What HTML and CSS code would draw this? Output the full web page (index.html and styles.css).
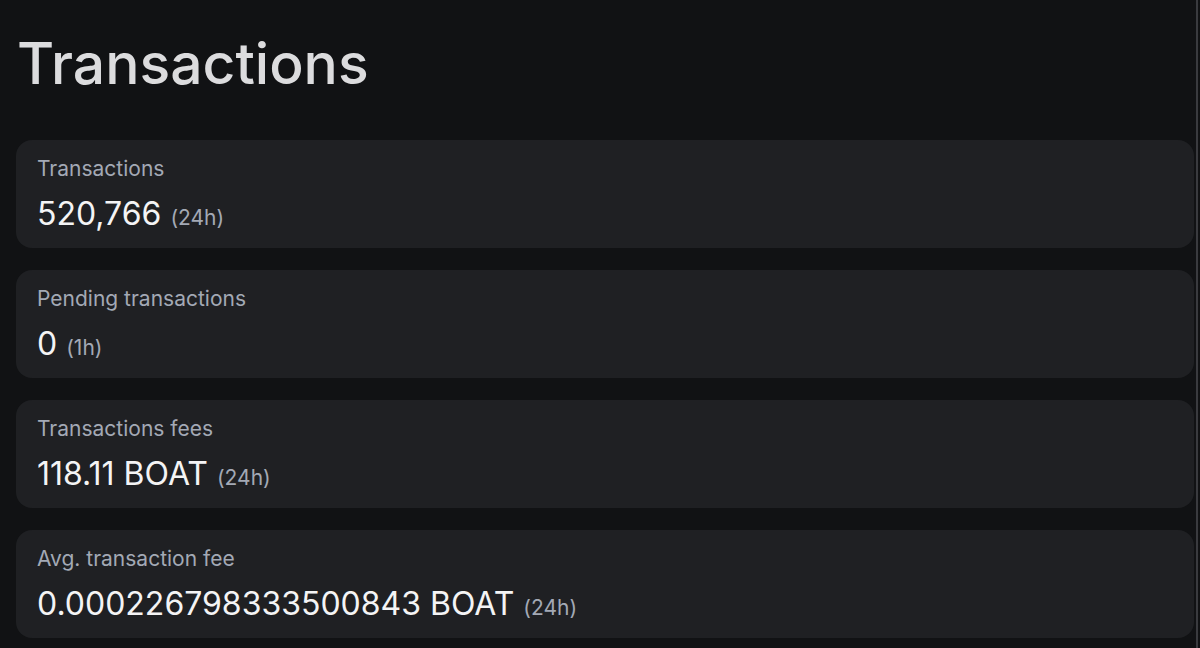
FILE: index.html
```html
<!DOCTYPE html>
<html>
<head>
<meta charset="utf-8">
<link rel="stylesheet" href="styles.css">
</head>
<body>
<div class="page">
  <h1 class="title">Transactions</h1>
  <div class="cards">
    <div class="card">
      <div class="label">Transactions</div>
      <div class="value">520,766 <span class="period">(24h)</span></div>
    </div>
    <div class="card">
      <div class="label">Pending transactions</div>
      <div class="value">0 <span class="period">(1h)</span></div>
    </div>
    <div class="card">
      <div class="label">Transactions fees</div>
      <div class="value">118.11 BOAT <span class="period">(24h)</span></div>
    </div>
    <div class="card">
      <div class="label">Avg. transaction fee</div>
      <div class="value">0.000226798333500843 BOAT <span class="period">(24h)</span></div>
    </div>
  </div>
</div>
<div class="scrollbar"></div>
</body>
</html>
```
FILE: styles.css
```css
html, body {
  margin: 0;
  padding: 0;
  background: #111214;
  height: 100%;
  overflow: hidden;
}
body {
  font-family: "Inter", "Noto Sans", sans-serif;
  color: #f2f2f3;
}
.page {
  padding: 30px 6px 0 16px;
}
.title {
  margin: 0 0 0 1px;
  font-family: "Inter", sans-serif;
  font-weight: 500;
  font-size: 57px;
  line-height: 68px;
  color: #dcdcde;
}
.cards {
  margin-top: 42px;
  display: flex;
  flex-direction: column;
  gap: 22px;
}
.card {
  background: #1f2023;
  border-radius: 16px;
  height: 108px;
  box-sizing: border-box;
  padding: 15px 21px 0 21px;
}
.label {
  font-size: 21px;
  line-height: 28px;
  color: #a3a9b5;
}
.value {
  margin-top: 11px;
  font-size: 32px;
  line-height: 40px;
  color: #f4f4f5;
}
.period {
  font-size: 21px;
  color: #a3a9b5;
}
.scrollbar {
  position: fixed;
  top: 0;
  right: 2px;
  width: 2px;
  height: 100%;
  background: #3a3b3f;
}
```
